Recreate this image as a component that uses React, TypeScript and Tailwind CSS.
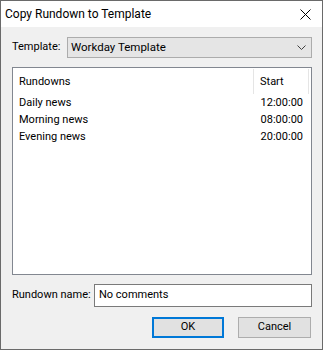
import React from 'react';

const rows = [
  { name: 'Daily news', start: '12:00:00' },
  { name: 'Morning news', start: '08:00:00' },
  { name: 'Evening news', start: '20:00:00' },
];

export default function App() {
  return (
    <div
      className="w-[323px] h-[350px] flex flex-col border border-[#6a6a6a] bg-[#f0f0f0] text-[11px] text-black whitespace-nowrap"
      style={{ fontFamily: 'Roboto, "Noto Sans", sans-serif' }}
    >
      {/* Title bar */}
      <div className="h-[26px] bg-white flex items-center justify-between pl-[4px] pr-[11px] shrink-0">
        <span className="text-[12px] leading-none">Copy Rundown to Template</span>
        <svg width="11" height="11" viewBox="0 0 11 11" className="mt-[1px]">
          <path d="M0.5 0.5 L10.5 10.5 M10.5 0.5 L0.5 10.5" stroke="#000" strokeWidth="1" />
        </svg>
      </div>

      {/* Body */}
      <div className="flex-1 flex flex-col pl-[11px] pr-[10px] pt-[10px]">
        <div className="flex items-center h-[21px]">
          <span className="w-[55px] shrink-0">Template:</span>
          <div className="flex-1 h-[21px] bg-[#e5e5e5] border border-[#acacac] flex items-center justify-between pl-[3px] pr-[5px]">
            <span className="text-[11.5px]">Workday Template</span>
            <svg width="9" height="5" viewBox="0 0 9 5">
              <path d="M0.5 0.5 L4.5 4.5 L8.5 0.5" stroke="#404040" strokeWidth="1" fill="none" />
            </svg>
          </div>
        </div>

        <div className="mt-[9px] h-[208px] bg-white border border-[#828790] flex flex-col">
          <div className="flex h-[25px] mt-[1px]">
            <div className="w-[240px] pl-[6px] flex items-center pt-[1px]">Rundowns</div>
            <div className="w-[56px] border-l border-r border-[#e5e5e5] pl-[6px] flex items-center pt-[1px]">Start</div>
          </div>
          {rows.map((r) => (
            <div key={r.name} className="flex h-[17px] items-center pt-[1px]">
              <div className="w-[240px] pl-[6px]">{r.name}</div>
              <div className="w-[50px] text-right">{r.start}</div>
            </div>
          ))}
        </div>

        <div className="mt-[9px] flex items-center h-[23px]">
          <span className="w-[82px] shrink-0">Rundown name:</span>
          <div className="flex-1 h-[23px] bg-white border border-[#7a7a7a] flex items-center pl-[4px]">
            No comments
          </div>
        </div>

        <div className="mt-[10px] flex justify-end gap-[14px] pr-[1px]">
          <button className="w-[72px] h-[21px] bg-[#e1e1e1] border-2 border-[#0078d7] flex items-center justify-center">
            OK
          </button>
          <button className="w-[73px] h-[21px] bg-[#e1e1e1] border border-[#adadad] flex items-center justify-center">
            Cancel
          </button>
        </div>
      </div>
    </div>
  );
}
